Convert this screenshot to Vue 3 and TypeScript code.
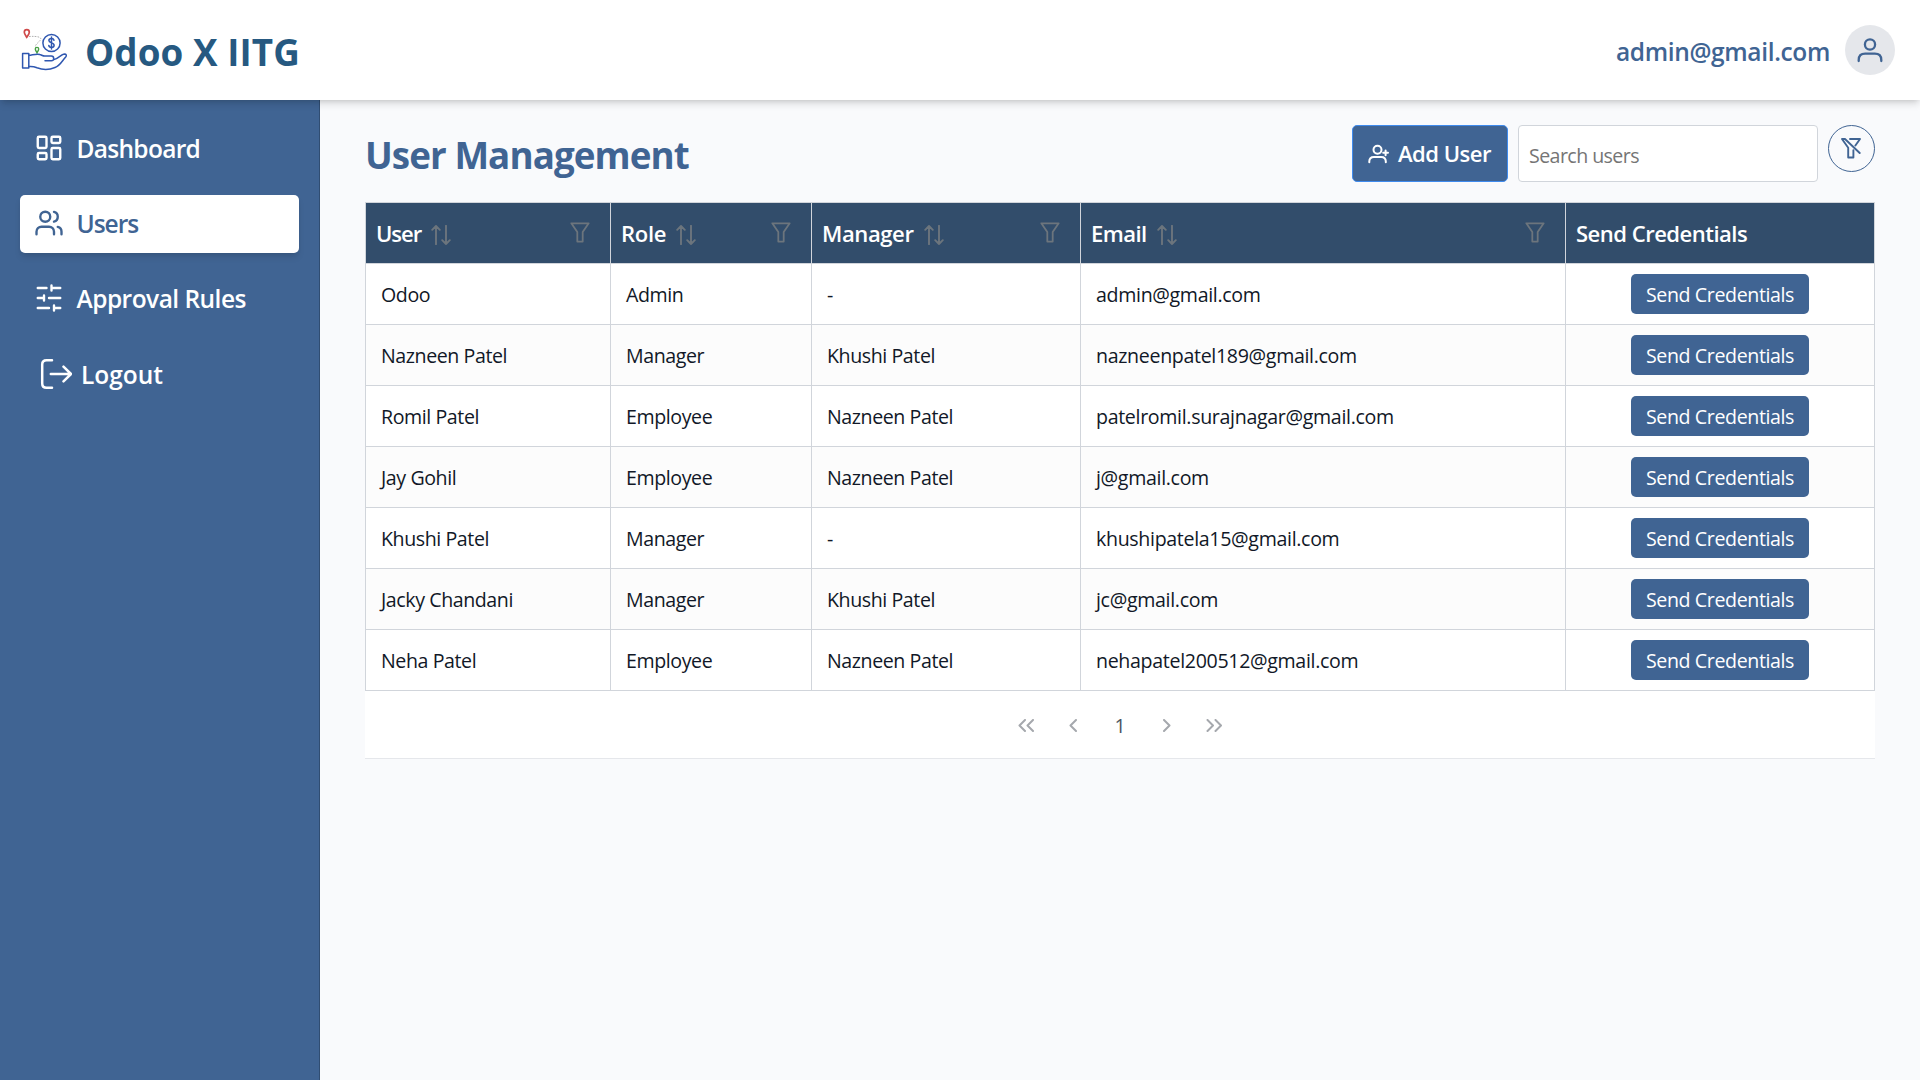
<script setup lang="ts">
interface User { name: string; role: string; manager: string; email: string }

const columns = [
  { key: 'user', label: 'User', tight: '-1px' },
  { key: 'role', label: 'Role', tight: '-0.3px' },
  { key: 'manager', label: 'Manager', tight: '-0.4px' },
  { key: 'email', label: 'Email', tight: '-0.55px' },
]

const users: User[] = [
  { name: 'Odoo', role: 'Admin', manager: '-', email: 'admin@gmail.com' },
  { name: 'Nazneen Patel', role: 'Manager', manager: 'Khushi Patel', email: 'nazneenpatel189@gmail.com' },
  { name: 'Romil Patel', role: 'Employee', manager: 'Nazneen Patel', email: 'patelromil.surajnagar@gmail.com' },
  { name: 'Jay Gohil', role: 'Employee', manager: 'Nazneen Patel', email: 'j@gmail.com' },
  { name: 'Khushi Patel', role: 'Manager', manager: '-', email: 'khushipatela15@gmail.com' },
  { name: 'Jacky Chandani', role: 'Manager', manager: 'Khushi Patel', email: 'jc@gmail.com' },
  { name: 'Neha Patel', role: 'Employee', manager: 'Nazneen Patel', email: 'nehapatel200512@gmail.com' },
]
</script>

<template>
  <div class="page">
    <header class="topbar">
      <div class="brand">
        <svg class="logo" width="50" height="46" viewBox="0 0 50 46" fill="none">
          <path d="M9 8.500c8-.5 14 .5 11 4s-5 4-4.500 7" stroke="#9a9a9a" stroke-width=".8" stroke-dasharray="1.600 1.200" />
          <path d="M6.700 9.300C5 6.600 4.300 5.600 4.300 4.200a2.500 2.500 0 0 1 5 0c0 1.400-.8 2.400-2.600 5.100Z" stroke="#cf4a4a" stroke-width="1.700" />
          <path d="M17 24.800c-1.200-2-1.700-2.700-1.700-3.700a1.700 1.700 0 0 1 3.400 0c0 1-.5 1.700-1.700 3.700Z" stroke="#47a044" stroke-width="1.400" />
          <g stroke="#2f57b0" stroke-width="1.500" stroke-linecap="round" stroke-linejoin="round">
            <circle cx="31.500" cy="15" r="8.600" />
            <path d="M34 12.300c-.3-1.200-1.300-1.800-2.500-1.800-1.500 0-2.600.8-2.600 2.100 0 3 5.200 1.500 5.200 4.600 0 1.300-1.200 2.200-2.600 2.200s-2.500-.7-2.700-2M31.500 8.900v12.200" />
            <path d="M2.600 25.500h6.200V40H2.600zM8.800 27.500c5-.8 8-2 11-1 2 .6 3 1.600 5 1.600h6.500c3.200 0 3.200 4.600 0 4.600H25" />
            <path d="M34 31.500c4-.6 7-5.300 10.300-5.500 2.200 0 2.600 1.600 1.400 3C42 33 40 38 35 39.500c-6 2.500-12 2.500-18 .3-3-1.300-5-1.600-8.200-1.300" />
          </g>
        </svg>
        <span class="brand-name">Odoo X IITG</span>
      </div>
      <div class="account">
        <span class="account-email">admin@gmail.com</span>
        <span class="avatar">
          <svg width="50" height="50" viewBox="0 0 50 50" fill="none" stroke="#406493" stroke-width="2.300" stroke-linecap="round">
            <circle cx="25" cy="19.500" r="5.100" />
            <path d="M13.700 36v-1c0-4 2.500-6.300 6.500-6.300h9.600c4 0 6.500 2.300 6.500 6.300v1" />
          </svg>
        </span>
      </div>
    </header>

    <div class="body">
      <nav class="sidebar">
        <a class="item">
          <svg class="nav-icon" viewBox="0 0 24 24"><rect x="3" y="3" width="7" height="9" rx="1" /><rect x="14" y="3" width="7" height="5" rx="1" /><rect x="14" y="12" width="7" height="9" rx="1" /><rect x="3" y="16" width="7" height="5" rx="1" /></svg>
          <span class="dash">Dashboard</span>
        </a>
        <a class="item active">
          <svg class="nav-icon" viewBox="0 0 24 24"><path d="M16 21v-2a4 4 0 0 0-4-4H6a4 4 0 0 0-4 4v2" /><circle cx="9" cy="7" r="4" /><path d="M22 21v-2a4 4 0 0 0-3-3.870M16 3.130a4 4 0 0 1 0 7.750" /></svg>
          <span class="usr">Users</span>
        </a>
        <a class="item">
          <svg class="nav-icon" viewBox="0 0 24 24"><path d="M21 4h-7M10 4H3M21 12h-9M8 12H3M21 20h-5M12 20H3M14 2v4M8 10v4M16 18v4" /></svg>
          <span class="appr">Approval Rules</span>
        </a>
        <a class="item logout">
          <svg width="32" height="32" viewBox="0 0 32 32" fill="none" stroke="#fff" stroke-width="2.500" stroke-linecap="round" stroke-linejoin="round"><path d="M12 2.200H6.500c-2.700 0-4.300 1.500-4.300 4.300v19c0 2.800 1.600 4.300 4.300 4.300H12M10.800 16H31M23.500 8.700 31 16l-7.500 7.300" /></svg>
          <span>Logout</span>
        </a>
      </nav>

      <main class="content">
        <div class="toolbar">
          <h1>User Management</h1>
          <div class="actions">
            <button class="add">
              <svg width="21" height="21" viewBox="0 0 21 21" fill="none" stroke="#fff" stroke-width="2" stroke-linecap="round"><circle cx="9.500" cy="5.700" r="4" /><path d="M1.300 18.200v-.6c0-3.200 2-4.600 4.600-4.600h7.300c2.600 0 4.600 1.400 4.600 4.600v.6M17.600 6.400v4.800M15.200 8.800H20" /></svg>
              <span>Add User</span>
            </button>
            <input class="search" type="text" placeholder="Search users" />
            <button class="clear" aria-label="Clear filters">
              <svg width="20" height="21" viewBox="0 0 20 21" fill="none" stroke="#406493" stroke-width="1.900" stroke-linejoin="round" stroke-linecap="round"><path d="M4 1H1l6.200 8.700v9.800h5.200v-7.300M4 1l14.700 14M9 1h10l-4.600 6.500" /></svg>
            </button>
          </div>
        </div>

        <table class="grid">
          <colgroup><col class="c1" /><col class="c2" /><col class="c3" /><col class="c4" /><col class="c5" /></colgroup>
          <thead>
            <tr>
              <th v-for="col in columns" :key="col.key">
                <div class="head">
                  <span :style="{ letterSpacing: col.tight }">{{ col.label }}</span>
                  <svg class="sort" width="20" height="20" viewBox="0 0 20 20"><path d="M5 19.200V1M1.200 4.800 5 1l3.800 3.800M15 .8V19M11.200 15.200 15 19l3.800-3.800" /></svg>
                  <svg class="funnel" width="20" height="21" viewBox="0 0 20 21"><path d="M1.300 1.300h17.400l-6 8.700v9.600H7.300V10z" /></svg>
                </div>
              </th>
              <th><div class="head"><span class="send-head">Send Credentials</span></div></th>
            </tr>
          </thead>
          <tbody>
            <tr v-for="user in users" :key="user.email">
              <td>{{ user.name }}</td>
              <td>{{ user.role }}</td>
              <td>{{ user.manager }}</td>
              <td class="mail">{{ user.email }}</td>
              <td class="action"><button class="send">Send Credentials</button></td>
            </tr>
          </tbody>
        </table>

        <div class="pager">
          <span class="pg"><svg width="17" height="13" viewBox="0 0 17 13"><path d="M7 1 1.500 6.500 7 12M15 1 9.500 6.500 15 12" /></svg></span>
          <span class="pg"><svg width="8" height="13" viewBox="0 0 8 13"><path d="M7 1 1.500 6.500 7 12" /></svg></span>
          <span class="pg num">1</span>
          <span class="pg"><svg width="8" height="13" viewBox="0 0 8 13"><path d="M1 1l5.500 5.500L1 12" /></svg></span>
          <span class="pg"><svg width="17" height="13" viewBox="0 0 17 13"><path d="M1.500 1l5.500 5.500L1.500 12M9.500 1l5.500 5.500L9.500 12" /></svg></span>
        </div>
      </main>
    </div>
  </div>
</template>

<style>
body { margin: 0; background: #f9fafc; }
</style>

<style scoped>
* { box-sizing: border-box; }
.page { display: flex; flex-direction: column; height: 1080px; overflow: hidden; font-family: "Open Sans", "Noto Sans", sans-serif; background: #f9fafc; }
button, input { font-family: inherit; margin: 0; }
svg { display: block; flex: none; }

.topbar { position: relative; z-index: 1; flex: none; height: 100px; display: flex; align-items: center; justify-content: space-between; padding: 0 25px 0 20px; background: #fff; box-shadow: 0 5px 7.5px -1.25px rgba(0, 0, 0, .13), 0 2.5px 5px -2.5px rgba(0, 0, 0, .13); }
.brand { display: flex; align-items: center; }
.logo { margin-top: 2px; }
.brand-name { margin-left: 15px; padding-top: 3px; font-size: 36.75px; line-height: 50px; font-weight: 700; letter-spacing: .1px; color: #265981; }
.account { display: flex; align-items: center; gap: 15px; }
.account-email { padding-top: 4px; font-size: 24.5px; line-height: 36px; font-weight: 600; letter-spacing: -.35px; color: #406493; }
.avatar { width: 50px; height: 50px; border-radius: 50%; background: #e5e7eb; }

.body { flex: 1; display: flex; min-height: 0; }
.sidebar { flex: none; width: 320px; padding: 20px; display: flex; flex-direction: column; gap: 17px; background: #406493; border-right: 1px solid #304d72; }
.item { height: 58px; display: flex; align-items: center; gap: 12.5px; padding: 0 14px 2px; border-radius: 5px; color: #fff; font-size: 24.5px; font-weight: 600; white-space: nowrap; }
.item.active { background: #fff; color: #406493; box-shadow: 0 5px 7.5px -1.25px rgba(0, 0, 0, .1), 0 2.5px 5px -2.5px rgba(0, 0, 0, .1); }
.nav-icon { width: 30px; height: 30px; fill: none; stroke: currentColor; stroke-width: 1.9; stroke-linecap: round; stroke-linejoin: round; }
.dash { letter-spacing: -.7px; }
.usr { letter-spacing: -1px; }
.appr { letter-spacing: -.53px; }
.logout { padding-left: 20px; gap: 9px; margin-top: 1px; }

.content { flex: 1; padding: 25px 45px 0; }
.toolbar { display: flex; justify-content: space-between; height: 77px; }
h1 { margin: 0; padding-top: 5px; font-size: 36.75px; line-height: 50px; font-weight: 700; letter-spacing: -.92px; color: #406493; }
.actions { display: flex; align-items: flex-start; gap: 10px; }
.add { display: flex; align-items: center; gap: 9px; width: 156px; height: 57px; padding: 0 0 2px 15px; border: 1px solid #3f8bee; border-radius: 5px; background: #406493; color: #fff; font-size: 22.05px; font-weight: 600; letter-spacing: -.52px; white-space: nowrap; }
.add svg { margin-top: 4px; }
.search { width: 300px; height: 57px; padding: 3px 10px 0; border: 1px solid #d1d5db; border-radius: 4px; background: #fff; font-size: 19.6px; letter-spacing: -.57px; }
.search::placeholder { color: #757575; opacity: 1; }
.clear { width: 47px; height: 47px; display: flex; align-items: center; justify-content: center; padding: 0 1px 0 0; border: 1px solid #406493; border-radius: 50%; background: transparent; }

.grid { width: 1510px; table-layout: fixed; border-collapse: separate; border-spacing: 0; border-top: 1px solid #d1d5db; border-left: 1px solid #d1d5db; background: #fff; }
.c1 { width: 245px; }
.c2 { width: 201px; }
.c3 { width: 269px; }
.c4 { width: 485px; }
.c5 { width: 309px; }
th, td { height: 61px; border-right: 1px solid #d1d5db; border-bottom: 1px solid #d1d5db; text-align: left; vertical-align: middle; white-space: nowrap; }
th { padding: 0 20px 0 10px; background: #324d6b; color: #fff; font-size: 22.05px; line-height: 30px; font-weight: 600; }
.head { display: flex; align-items: center; }
.sort { margin: 4px 0 0 10px; fill: none; stroke: #6c757d; stroke-width: 1.9; stroke-linecap: round; stroke-linejoin: round; }
.funnel { margin: -1px 0 0 auto; fill: none; stroke: #6c757d; stroke-width: 1.8; stroke-linejoin: round; }
.send-head { letter-spacing: -.52px; }
td { padding: 1px 14px 0 15px; color: #111827; font-size: 19.6px; line-height: 30px; letter-spacing: -.42px; }
td.mail { letter-spacing: -.33px; }
tbody tr:nth-child(even) { background: #fcfcfc; }
td.action { padding: 0; }
.send { display: block; width: 178px; height: 40px; margin: 0 auto; padding: 1px 0 0; border: 0; border-radius: 5px; background: #406493; color: #fff; font-size: 19.6px; letter-spacing: -.39px; white-space: nowrap; }

.pager { width: 1510px; height: 68px; display: flex; align-items: center; justify-content: center; padding-top: 1px; background: #fff; border-bottom: 1px solid #e5e7eb; }
.pg { width: 47px; display: flex; justify-content: center; }
.pg path { fill: none; stroke: #a5a8ad; stroke-width: 2; stroke-linecap: round; stroke-linejoin: round; }
.num { padding-top: 1px; font-size: 19.6px; color: #4b5563; }
</style>
